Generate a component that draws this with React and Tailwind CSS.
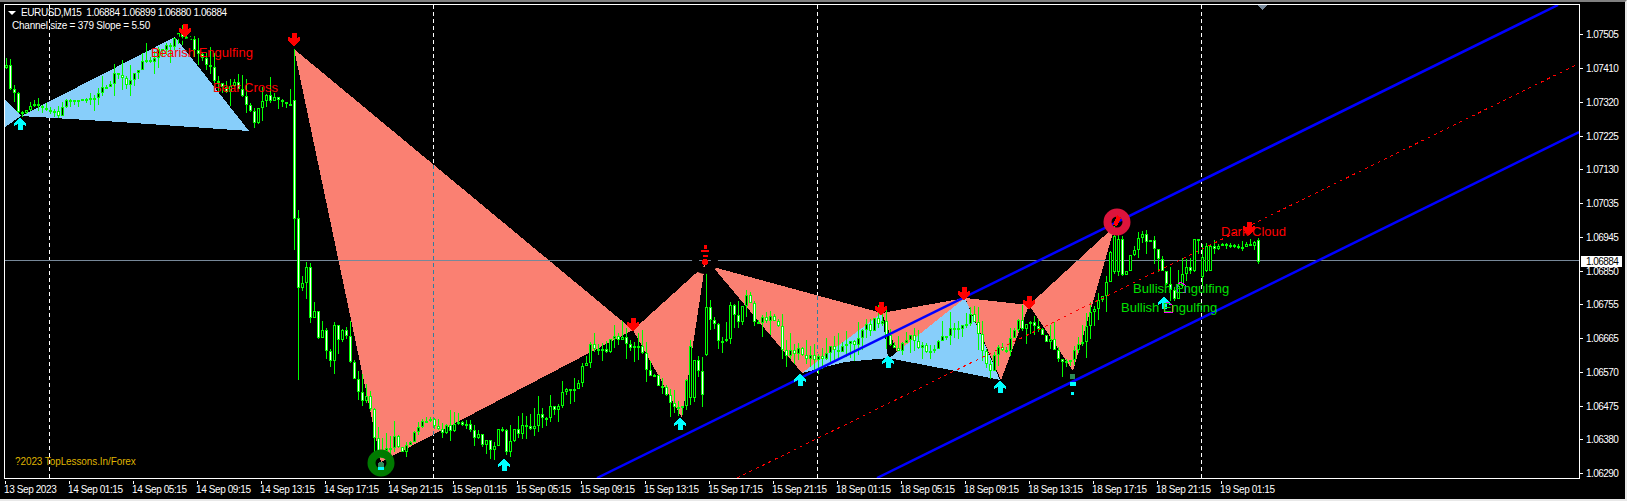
const path = [
  [5,68],[9,80],[13,95],[17,110],[21,116],[30,105],[45,108],[58,114],[65,100],[80,100],[90,98],[105,90],[115,78],[125,80],[135,75],[145,60],[160,48],[175,38],[185,33],[190,42],[198,58],[210,72],[222,88],[235,85],[249,115],[255,120],[265,100],[275,100],[285,106],[292,104],
  [293,219],[297,288],[301,300],[305,245],[309,330],[313,297],[317,345],[321,332],[330,362],[335,322],[339,350],[345,320],[347,355],[350,362],[355,385],[360,398],[366,392],[372,424],[377,458],[381,448],
  [395,440],[400,455],[410,440],[420,425],[425,415],[433,425],[445,428],[455,430],[465,423],[470,430],[480,437],[490,447],[500,430],[507,452],[515,430],[530,425],[545,415],[560,400],[565,390],[575,385],[585,365],[590,340],[600,350],[610,345],[620,335],[633,345],[640,350],[650,375],[665,395],[680,410],[685,395],[690,350],[697,360],[702,395],
  [705,308],[709,355],[715,320],[720,345],[725,340],[730,305],[735,315],[740,320],[745,300],[750,298],[755,325],[765,320],[775,320],[785,355],[795,350],[805,358],[815,360],[825,352],[835,345],[845,348],[855,340],[860,330],[870,325],[880,318],[885,330],[890,345],[895,352],[905,340],[912,340],[920,345],[930,350],[935,345],[945,335],[955,328],[965,325],[972,306],[975,330],[980,345],[985,365],[990,368],[995,345],[1005,350],[1010,340],[1015,325],[1020,325],[1029,315],[1035,330],[1040,335],[1050,345],[1060,355],[1072,368],[1075,345],[1082,340],[1090,315],[1100,300],[1105,290],[1112,238],[1120,240],[1125,275],[1130,260],[1135,250],[1140,235],[1150,240],[1160,268],[1165,280],[1170,290],[1175,295],[1180,275],[1190,265],[1195,240],[1205,250],[1208,246],[1215,248],[1222,244],[1235,247],[1245,244],[1250,245],[1255,242],[1262,262],
];

// candles that are read straight off the picture rather than from the path
const fixedCandles = {
  294: { top: 100, bottom: 219, high: 49, low: 250, falling: true },
  298: { top: 218, bottom: 288, high: 210, low: 380, falling: true },
  690: { top: 346, bottom: 398, high: 340, low: 405, falling: false },
  706: { top: 307, bottom: 355, high: 273, low: 356, falling: false },
  710: { top: 307, bottom: 320, high: 300, low: 330, falling: true },
  1114: { top: 236, bottom: 272, high: 226, low: 274, falling: false },
  1122: { top: 239, bottom: 275, high: 236, low: 276, falling: true },
  1202: { top: 257, bottom: 277, high: 244, low: 286, falling: false },
  1206: { top: 246, bottom: 271, high: 243, low: 272, falling: false },
  1258: { top: 240, bottom: 262, high: 238, low: 264, falling: true },
};

// stretches where the price hardly moves
const calm = [[25, 90], [395, 420], [1208, 1256]];

const priceLabels = ['1.07505','1.07410','1.07320','1.07225','1.07130','1.07035','1.06945','1.06850','1.06755','1.06665','1.06570','1.06475','1.06380','1.06290'];
const timeLabels = ['13 Sep 2023','14 Sep 01:15','14 Sep 05:15','14 Sep 09:15','14 Sep 13:15','14 Sep 17:15','14 Sep 21:15','15 Sep 01:15','15 Sep 05:15','15 Sep 09:15','15 Sep 13:15','15 Sep 17:15','15 Sep 21:15','18 Sep 01:15','18 Sep 05:15','18 Sep 09:15','18 Sep 13:15','18 Sep 17:15','18 Sep 21:15','19 Sep 01:15'];

const salmon = [
  '294,49 633,330 381,462',
  '633,330 705,265 682,418',
  '713,267 882,313 802,373',
  '882,313 965,298 897,352',
  '965,298 1029,305 1001,380',
  '1029,305 1115,226 1073,371',
];
const blue = [
  '5,100 21,116 5,127',
  '21,116 175,37 249,131 120,122',
  '802,373 882,313 888,358 845,362',
  '892,356 965,298 1000,380 940,368 888,358',
];
const redArrows = [[185,31],[294,40],[633,325],[881,309],[964,294],[1029,303],[1249,229]];
const cyanArrows = [[20,123],[504,464],[680,423],[800,379],[888,361],[1000,386],[1164,302]];

function yAt(x) {
  for (let i = 1; i < path.length; i++) {
    if (x <= path[i][0]) {
      const [x0, y0] = path[i - 1];
      const [x1, y1] = path[i];
      return y0 + ((y1 - y0) * (x - x0)) / (x1 - x0);
    }
  }
  return path[path.length - 1][1];
}

function rnd(i) {
  const v = Math.sin(i * 12.9898) * 43758.5453;
  return v - Math.floor(v);
}

function buildCandles() {
  const out = [];
  let prev = yAt(5);
  for (let i = 0; i < 314; i++) {
    const x = 6 + i * 4;
    const scale = calm.some(([a, b]) => x >= a && x <= b) ? 0.35 : 1;
    const close = Math.round(yAt(x) + (rnd(i) - 0.5) * 12 * scale);
    const open = Math.round(prev);
    const top = Math.min(open, close);
    const bottom = Math.max(Math.max(open, close), top + 2);
    const fixed = fixedCandles[x];
    out.push(fixed ? { x, ...fixed } : {
      x,
      top,
      bottom,
      high: top - Math.round(rnd(i + 500) ** 2 * 18 * scale),
      low: bottom + Math.round(rnd(i + 900) ** 2 * 16 * scale),
      falling: close > open,
    });
    prev = fixed ? fixed.bottom : close;
  }
  return out;
}

function Candles() {
  return buildCandles().map((c) => (
    <g key={c.x}>
      <rect x={c.x} y={c.high} width="1" height={c.low - c.high} fill="#00ff00" />
      <rect x={c.x - 1} y={c.top} width="3" height={c.bottom - c.top} fill="#00ff00" />
      <rect x={c.x} y={c.top + 1} width="1" height={Math.max(c.bottom - c.top - 2, 0)} fill={c.falling ? '#ffffff' : '#000000'} />
    </g>
  ));
}

function DownArrow({ x, y }) {
  return <polygon points={`${x - 2.5},${y - 7} ${x + 2.5},${y - 7} ${x + 2.5},${y - 2} ${x + 6},${y - 3} ${x + 6},${y} ${x},${y + 7} ${x - 6},${y} ${x - 6},${y - 3} ${x - 2.5},${y - 2}`} fill="#ff0000" />;
}

function UpArrow({ x, y }) {
  return <polygon points={`${x - 2.5},${y + 7} ${x + 2.5},${y + 7} ${x + 2.5},${y + 1} ${x + 6},${y + 3} ${x + 6},${y + 1} ${x},${y - 6} ${x - 6},${y + 1} ${x - 6},${y + 3} ${x - 2.5},${y + 1}`} fill="#00ffff" />;
}

function ChartDrawing() {
  return (
    <svg width="1574" height="473" viewBox="5 5 1574 473" shapeRendering="crispEdges" className="block">
      {[49, 433, 817, 1201].map((x) => (
        <line key={x} x1={x + 0.5} y1="5" x2={x + 0.5} y2="478" stroke="#ffffff" strokeDasharray="4 3" />
      ))}
      {blue.map((p) => <polygon key={p} points={p} fill="#87cefa" />)}
      {salmon.map((p) => <polygon key={p} points={p} fill="#fa8072" />)}
      <line x1="433.5" y1="165" x2="433.5" y2="435" stroke="#2f7f9f" strokeDasharray="4 3" />
      <line x1="817.5" y1="296" x2="817.5" y2="353" stroke="#2f7f9f" strokeDasharray="4 3" />
      <line x1="5" y1="260.5" x2="1579" y2="260.5" stroke="#778899" />
      <Candles />
      <line x1="737" y1="478" x2="1576" y2="65" stroke="#ff0000" strokeDasharray="3 4" />
      <line x1="597" y1="478" x2="1558" y2="5" stroke="#0000ff" strokeWidth="2.5" shapeRendering="auto" />
      <line x1="877" y1="478" x2="1579" y2="132" stroke="#0000ff" strokeWidth="2.5" shapeRendering="auto" />
      <circle cx="185" cy="30" r="10" fill="none" stroke="#000000" strokeWidth="2" shapeRendering="auto" />
      <circle cx="705" cy="261" r="9.5" fill="none" stroke="#000000" strokeWidth="7" shapeRendering="auto" />
      <circle cx="381" cy="463" r="9.5" fill="none" stroke="#007a00" strokeWidth="8" shapeRendering="auto" />
      <circle cx="1117" cy="222" r="9.5" fill="none" stroke="#dc143c" strokeWidth="8" shapeRendering="auto" />
      <circle cx="381" cy="465" r="3" fill="#2e8b57" />
      <rect x="378" y="467" width="6" height="3" fill="#00ffff" />
      <rect x="1070" y="374" width="5" height="5" fill="#2e8b57" />
      <rect x="1070" y="382" width="6" height="4" fill="#00ffff" />
      <rect x="1071" y="392" width="3" height="3" fill="#00ffff" />
      <circle cx="705" cy="262" r="3" fill="#ff0000" />
      <rect x="704" y="245" width="3" height="4" fill="#ff0000" />
      <rect x="701" y="250" width="8" height="2" fill="#ff0000" />
      <rect x="703" y="255" width="5" height="2" fill="#ff0000" />
      <polygon points="1117,215 1121,218 1117,226 1113,225" fill="#ff0000" />
      {redArrows.map(([x, y]) => <DownArrow key={x} x={x} y={y} />)}
      {cyanArrows.map(([x, y]) => <UpArrow key={x} x={x} y={y} />)}
      <polygon points="1177,285 1181,282 1185,285 1185,292 1177,292" fill="none" stroke="#ff00ff" />
      <polygon points="1164,305 1168,302 1172,305 1172,312 1164,312" fill="none" stroke="#ff00ff" />
      <polygon points="1258,5 1267,5 1262.5,10" fill="#778899" />
    </svg>
  );
}

function Label({ className, children }) {
  return <span className={`absolute text-[13px] leading-none whitespace-nowrap ${className}`}>{children}</span>;
}

export default function App() {
  return (
    <div className="w-[1627px] h-[501px] bg-black border-t-2 border-b-2 border-r-2 border-t-[#808080] border-b-[#e8e8e8] border-r-[#e8e8e8] font-['Liberation_Sans',sans-serif] text-white overflow-hidden flex flex-col">
      <div className="flex pl-1 pt-0.5 h-[479px] shrink-0">
        <div className="relative w-[1576px] h-[475px] border border-white overflow-hidden">
          <ChartDrawing />
          <div className="absolute top-[3px] left-[3px] flex items-center gap-[5px] text-[10px] leading-none tracking-[-0.4px] whitespace-nowrap">
            <span className="w-0 h-0 border-x-4 border-x-transparent border-t-4 border-t-white" />
            <span>EURUSD,M15&nbsp; 1.06884 1.06899 1.06880 1.06884</span>
          </div>
          <span className="absolute top-[16px] left-[7px] text-[10px] leading-none tracking-[-0.23px] whitespace-nowrap">Channel size = 379 Slope = 5.50</span>
          <Label className="top-[41px] left-[146px] text-[#ff0000]">Bearish Engulfing</Label>
          <Label className="top-[76px] left-[208px] text-[#ff0000]">Bear Cross</Label>
          <Label className="top-[220px] left-[1216px] text-[#ff0000]">Dark Cloud</Label>
          <Label className="top-[277px] left-[1128px] text-[#00e000]">Bullish Engulfing</Label>
          <Label className="top-[296px] left-[1116px] text-[#00e000]">Bullish Engulfing</Label>
          <span className="absolute top-[452px] left-[10px] text-[10px] leading-none tracking-[-0.1px] text-[#dfb200] whitespace-nowrap">?2023 TopLessons.In/Forex</span>
        </div>
        <div className="relative flex flex-col pt-[14px] h-[475px]">
          {priceLabels.map((p) => (
            <div key={p} className="h-[33.75px] shrink-0 flex items-center gap-[3px] text-[10px] tracking-[-0.55px]">
              <span className="w-[3px] h-px bg-white" />
              <span>{p}</span>
            </div>
          ))}
          <span className="absolute top-[252px] left-px w-[41px] h-[11px] bg-white text-black text-[10px] tracking-[-0.55px] leading-[11px] pl-[5px]">1.06884</span>
        </div>
      </div>
      <div className="flex pl-[5px]">
        {timeLabels.map((t) => (
          <div key={t} className="w-[64px] shrink-0 flex flex-col">
            <span className="w-px h-[3px] bg-white" />
            <span className="-ml-px text-[10px] leading-[11px] tracking-[-0.4px] whitespace-nowrap">{t}</span>
          </div>
        ))}
      </div>
    </div>
  );
}
